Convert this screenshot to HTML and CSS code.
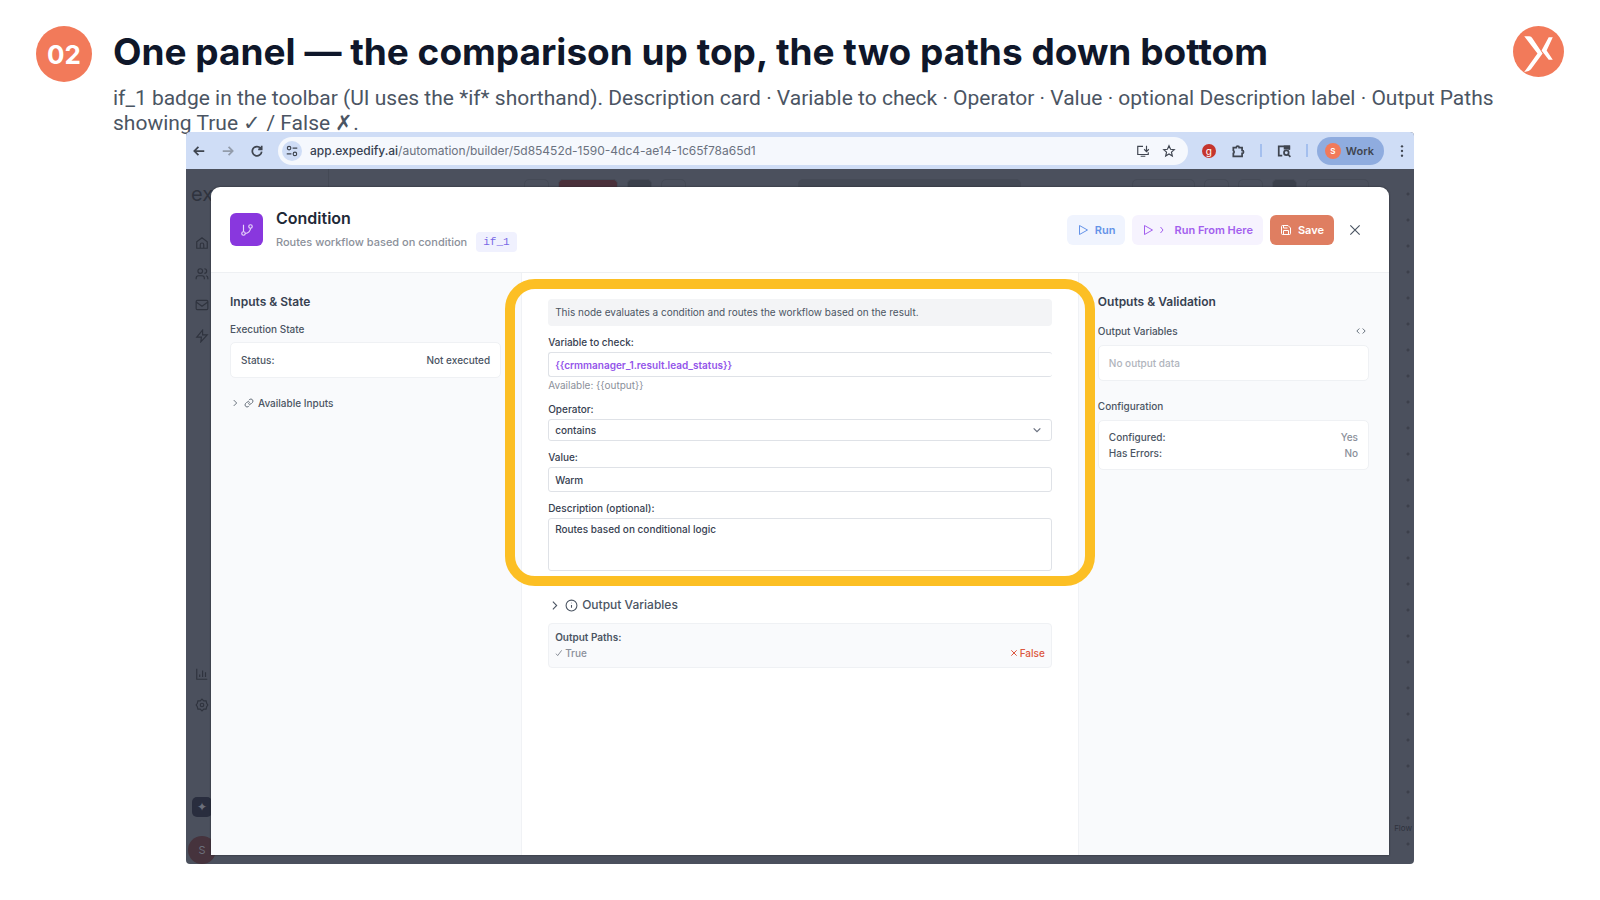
FILE: index.html
```
<!DOCTYPE html>
<html lang="en">
<head>
    <meta charset="UTF-8">
    <meta name="viewport" content="width=device-width, initial-scale=1.0">
    <title>Condition node</title>
    <link rel="stylesheet" href="styles.css">
</head>
<body>
    <main class="slide">
        <header class="slide-header">
            <span class="step">02</span>
            <div class="slide-text">
                <h1>One panel — the comparison up top, the two paths down bottom</h1>
                <p>if_1 badge in the toolbar (UI uses the *if* shorthand). Description card · Variable to check · Operator · Value · optional Description label · Output Paths showing True ✓ / False ✗.</p>
            </div>
            <svg class="brand" viewBox="0 0 50 50">
                <circle cx="25" cy="25" r="25" fill="#f27a5a"/>
                <path d="M11 10h5q2 0 3 2l10 15-11 15q-2 3-7 3l13-18z" fill="#fff"/>
                <path d="M35 11h4l-6 13 6 9h-4l-7-9z" fill="#fff"/>
            </svg>
        </header>

        <section class="browser">
            <div class="chrome">
                <button class="nav-btn" aria-label="Back"><svg viewBox="0 0 24 24"><path d="M21 12H4M11 5l-7 7 7 7"/></svg></button>
                <button class="nav-btn dim" aria-label="Forward"><svg viewBox="0 0 24 24"><path d="M3 12h17M13 5l7 7-7 7"/></svg></button>
                <button class="nav-btn" aria-label="Reload"><svg viewBox="0 0 24 24"><path d="M20 13a8 8 0 1 1-2-6l2 2M20 3v6h-6"/></svg></button>
                <div class="address">
                    <span class="site-info"><svg viewBox="0 0 24 24"><circle cx="7" cy="7" r="3"/><path d="M13 7h8M3 17h8"/><circle cx="17" cy="17" r="3"/></svg></span>
                    <span class="url"><b>app.expedify.ai</b>/automation/builder/5d85452d-1590-4dc4-ae14-1c65f78a65d1</span>
                    <svg viewBox="0 0 24 24"><path d="M12 4H3v14h18v-4M8 21h8M18 3v9M14 9l4 4 4-4"/></svg>
                    <svg viewBox="0 0 24 24"><path d="m12 3 2.700 6 6.300.6-4.800 4.300 1.500 6.600-5.700-3.500-5.700 3.500 1.500-6.600L3 9.600 9.300 9z"/></svg>
                </div>
                <div class="extensions">
                    <span class="ext-red">g</span>
                    <svg viewBox="0 0 24 24"><path d="M4 6h5a2.500 2.500 0 0 1 5 0h5v5a2.500 2.500 0 0 1 0 5v5H4v-5a3 3 0 0 0 0-5z"/></svg>
                    <i class="divider"></i>
                    <svg viewBox="0 0 24 24"><path d="M9 20H3V4h18v6"/><path d="M13 4h8v4h-8z" fill="currentColor"/><circle cx="16" cy="15" r="4"/><path d="m19 18 4 4"/></svg>
                    <i class="divider"></i>
                </div>
                <button class="profile"><span>S</span>Work</button>
                <button class="nav-btn kebab" aria-label="Menu"><svg viewBox="0 0 24 24"><circle cx="12" cy="4" r="2"/><circle cx="12" cy="12" r="2"/><circle cx="12" cy="20" r="2"/></svg></button>
            </div>

            <div class="workspace">
                <!-- dimmed app behind the dialog -->
                <div class="backdrop" aria-hidden="true">
                    <div class="sidebar">
                        <span class="wordmark">ex</span>
                        <svg viewBox="0 0 24 24"><path d="M3 10l9-7 9 7v11H3zM9 21v-6a3 3 0 0 1 6 0v6"/></svg>
                        <svg viewBox="0 0 24 24"><circle cx="9" cy="7" r="4"/><path d="M2 21v-2a4 4 0 0 1 4-4h6a4 4 0 0 1 4 4v2M16 3a4 4 0 0 1 0 8M22 21v-2a4 4 0 0 0-3-4"/></svg>
                        <svg viewBox="0 0 24 24"><rect x="2" y="4" width="20" height="16" rx="2"/><path d="m22 7-10 7L2 7"/></svg>
                        <svg viewBox="0 0 24 24"><path d="M13 2 3 14h8l-1 8 11-12h-8z"/></svg>
                        <svg class="push" viewBox="0 0 24 24"><path d="M3 3v18h18M8 17v-4M13 17V6M18 17v-8"/></svg>
                        <svg viewBox="0 0 24 24"><path d="M12 2l3 3 4 0 1 4 2 3-2 3-1 4-4 0-3 3-3-3-4 0-1-4-2-3 2-3 1-4 4 0z"/><circle cx="12" cy="12" r="3"/></svg>
                        <span class="ai">✦</span>
                        <span class="avatar">S</span>
                    </div>
                    <div class="topbar">
                        <i class="ghost"></i><i class="ghost maroon"></i><i class="ghost solid"></i><i class="ghost"></i>
                        <i class="ghost tabs"></i>
                        <i class="ghost wide"></i><i class="ghost"></i><i class="ghost"></i><i class="ghost solid"></i><i class="ghost wide"></i>
                    </div>
                    <div class="canvas">
                        <span class="flow">Flow</span>
                    </div>
                </div>

                <div class="modal" role="dialog" aria-labelledby="modal-title">
                    <header class="modal-header">
                        <span class="node-icon"><svg viewBox="0 0 24 24"><path d="M6 3v12M18 9a9 9 0 0 1-9 9"/><circle cx="18" cy="6" r="3"/><circle cx="6" cy="18" r="3"/></svg></span>
                        <div class="node-name">
                            <h2 id="modal-title">Condition</h2>
                            <p>Routes workflow based on condition <code>if_1</code></p>
                        </div>
                        <button class="btn run"><svg viewBox="0 0 24 24"><path d="M5 3l16 9-16 9z"/></svg>Run</button>
                        <button class="btn run-from"><svg viewBox="0 0 24 24"><path d="M5 3l16 9-16 9z"/></svg><svg viewBox="0 0 24 24"><path d="m9 6 5 6-5 6"/></svg>Run From Here</button>
                        <button class="btn save"><svg viewBox="0 0 24 24"><path d="M5 3h11l5 5v11a2 2 0 0 1-2 2H5a2 2 0 0 1-2-2V5a2 2 0 0 1 2-2zM7 3v5h8M7 21v-8h10v8"/></svg>Save</button>
                        <button class="close" aria-label="Close"><svg viewBox="0 0 24 24"><path d="M4 4l16 16M20 4L4 20"/></svg></button>
                    </header>

                    <div class="columns">
                        <aside class="side">
                            <h3>Inputs &amp; State</h3>
                            <h4>Execution State</h4>
                            <dl class="card">
                                <div><dt>Status:</dt><dd>Not executed</dd></div>
                            </dl>
                            <button class="toggle">
                                <svg viewBox="0 0 24 24"><path d="m9 5 7 7-7 7"/></svg>
                                <svg viewBox="0 0 24 24"><path d="M10 13a5 5 0 0 0 7.500.5l3-3a5 5 0 0 0-7-7l-2 2M14 11a5 5 0 0 0-7.500-.5l-3 3a5 5 0 0 0 7 7l2-2"/></svg>
                                Available Inputs
                            </button>
                        </aside>

                        <div class="main-col">
                            <form class="fields">
                                <p class="notice">This node evaluates a condition and routes the workflow based on the result.</p>
                                <label for="variable">Variable to check:</label>
                                <input class="variable" id="variable" type="text" value="{{crmmanager_1.result.lead_status}}">
                                <p class="hint">Available: {{output}}</p>
                                <label for="operator">Operator:</label>
                                <select id="operator"><option>contains</option></select>
                                <label for="value">Value:</label>
                                <input id="value" type="text" value="Warm">
                                <label for="description">Description (optional):</label>
                                <textarea id="description">Routes based on conditional logic</textarea>
                            </form>
                            <button class="toggle large">
                                <svg viewBox="0 0 24 24"><path d="m9 5 7 7-7 7"/></svg>
                                <svg viewBox="0 0 24 24"><circle cx="12" cy="12" r="10"/><path d="M12 16v-5M12 7v1"/></svg>
                                Output Variables
                            </button>
                            <div class="paths">
                                <strong>Output Paths:</strong>
                                <div class="path-row">
                                    <span><svg viewBox="0 0 24 24"><path d="m3 14 5 6L20 4"/></svg>True</span>
                                    <span class="false"><svg viewBox="0 0 24 24"><path d="M4 4l16 16M20 4L4 20"/></svg>False</span>
                                </div>
                            </div>
                        </div>

                        <aside class="side right">
                            <h3>Outputs &amp; Validation</h3>
                            <h4>Output Variables <svg viewBox="0 0 24 24"><path d="m8 6-6 6 6 6M16 6l6 6-6 6"/></svg></h4>
                            <p class="card empty">No output data</p>
                            <h4>Configuration</h4>
                            <dl class="card">
                                <div><dt>Configured:</dt><dd>Yes</dd></div>
                                <div><dt>Has Errors:</dt><dd>No</dd></div>
                            </dl>
                        </aside>
                    </div>
                </div>
            </div>
        </section>
    </main>
</body>
</html>
```
FILE: styles.css
```
:root {
    --coral: #f27a5a;
    --ink: #0f172a;
    --text: #4b5563;
    --muted: #8b909a;
    --panel: #f9fafc;
    --purple: #9354ea;
    --yellow: #fcbf24;
    --dim: #4b505d;
}

* {
    box-sizing: border-box;
}

body {
    margin: 0;
    background: #fff;
    color: var(--text);
    font-family: Inter, "Liberation Sans", sans-serif;
}

h1, h2, h3, h4, p, dl, dd {
    margin: 0;
}

button, input, select, textarea {
    font-family: inherit;
    color: inherit;
}

button {
    display: flex;
    align-items: center;
    padding: 0;
    border: 0;
    background: none;
    cursor: pointer;
}

svg {
    flex: none;
    width: 14px;
    height: 14px;
    fill: none;
    stroke: currentColor;
    stroke-width: 2;
}

/* Slide header */

.slide {
    display: flex;
    flex-direction: column;
    min-height: 100vh;
    padding: 26px 36px 36px;
}

.slide-header {
    display: flex;
    align-items: flex-start;
    height: 106px;
}

.step {
    display: flex;
    flex: none;
    align-items: center;
    justify-content: center;
    width: 56px;
    height: 56px;
    margin-right: 21px;
    border-radius: 50%;
    background: var(--coral);
    color: #fff;
    font-size: 26px;
    font-weight: 700;
}

.slide-text {
    flex: 1;
}

.slide-text h1 {
    color: var(--ink);
    font-size: 37px;
    line-height: 52px;
    font-weight: 700;
}

.slide-text p {
    padding-top: 8px;
    font-family: Roboto, "Liberation Sans", sans-serif;
    font-size: 21px;
    line-height: 25px;
}

.brand {
    width: 51px;
    height: 51px;
    stroke: none;
}

/* Browser window */

.browser {
    display: flex;
    flex: 1;
    flex-direction: column;
    width: calc(100% - 300px);
    margin: 0 auto;
    overflow: hidden;
    border-radius: 4px;
    background: var(--dim);
}

.chrome {
    display: flex;
    align-items: center;
    height: 37px;
    padding: 0 5px;
    background: #cfddf6;
    color: #3f4550;
}

.chrome svg {
    stroke-width: 3;
}

.nav-btn {
    width: 29px;
    padding-left: 1px;
}

.nav-btn.dim {
    color: #939cab;
}

.kebab {
    width: 14px;
    padding: 0;
}

.kebab svg {
    fill: currentColor;
    stroke: none;
}

.address {
    display: flex;
    flex: 1;
    align-items: center;
    gap: 12px;
    height: 28px;
    padding: 0 12px 0 4px;
    border-radius: 14px;
    background: #f5f8fd;
}

.address svg {
    stroke-width: 2;
}

.site-info {
    display: flex;
    align-items: center;
    justify-content: center;
    width: 20px;
    height: 20px;
    margin-right: -4px;
    border-radius: 50%;
    background: #cfddf6;
}

.url {
    flex: 1;
    color: #6b7280;
    font-size: 12px;
}

.url b {
    color: #374151;
    font-weight: 500;
}

.extensions {
    display: flex;
    align-items: center;
    gap: 15px;
    padding: 0 9px 0 14px;
}

.ext-red {
    width: 14px;
    border-radius: 50%;
    background: #c5352d;
    color: #fff;
    font-size: 10px;
    line-height: 14px;
    text-align: center;
}

.divider {
    width: 2px;
    height: 13px;
    background: #a4bfee;
}

.profile {
    gap: 5px;
    height: 28px;
    margin-right: 11px;
    padding: 0 10px 0 8px;
    border-radius: 14px;
    background: #8facdf;
    font-size: 11px;
    font-weight: 600;
}

.profile span {
    width: 16px;
    border-radius: 50%;
    background: var(--coral);
    color: #fff;
    font-size: 8px;
    line-height: 16px;
}

/* Dimmed app, shares one grid cell with the dialog */

.workspace {
    display: grid;
    flex: 1;
}

.backdrop,
.modal {
    grid-area: 1 / 1;
}

.backdrop {
    display: grid;
    grid-template-rows: 18px 1fr;
    grid-template-columns: 142px 1fr;
    color: #2f333e;
}

.sidebar {
    display: flex;
    grid-row: span 2;
    flex-direction: column;
    align-items: center;
    gap: 17px;
    width: 32px;
}

.wordmark {
    height: 50px;
    padding-top: 13px;
    font-size: 20px;
    line-height: 24px;
}

.push {
    margin-top: auto;
}

.ai {
    width: 20px;
    margin: 68px 0 2px;
    border-radius: 5px;
    background: #292d3e;
    color: #6b6f7b;
    font-size: 12px;
    line-height: 20px;
    text-align: center;
}

.avatar {
    width: 28px;
    border-radius: 50%;
    background: #46333d;
    color: #6b6f7b;
    font-size: 11px;
    line-height: 28px;
    text-align: center;
}

.topbar {
    display: flex;
    gap: 9px;
    padding: 10px 45px 0 195px;
    overflow: hidden;
    border-left: 1px solid #444955;
}

.ghost {
    width: 25px;
    height: 20px;
    border: 1px solid #454a56;
    border-radius: 5px;
}

.ghost.wide {
    width: 63px;
}

.ghost.solid {
    background: #3b404b;
}

.ghost.maroon {
    width: 60px;
    background: #4a303a;
}

.ghost.tabs {
    width: 223px;
    margin: 0 auto;
    background: #444955;
}

.canvas {
    display: flex;
    align-items: flex-end;
    justify-content: flex-end;
    padding: 0 2px 29px 0;
    background: radial-gradient(circle, #3c404b 1px, transparent 2px) right -7px top 20px / 26px 26px;
}

.flow {
    font-size: 8px;
    line-height: 14px;
}

/* Dialog */

.modal {
    display: flex;
    flex-direction: column;
    z-index: 1;
    margin: 18px 25px 9px;
    border-radius: 9px 9px 0 0;
    background: #fff;
    box-shadow: 0 0 2px #22252d;
}

.modal-header {
    display: flex;
    align-items: center;
    height: 86px;
    padding: 0 27px 0 19px;
    border-bottom: 1px solid #eef0f3;
}

.node-icon {
    display: flex;
    align-items: center;
    justify-content: center;
    width: 33px;
    height: 33px;
    margin-right: 13px;
    border-radius: 6px;
    background: #8937de;
    color: #e6d5fa;
}

.node-name {
    flex: 1;
}

.node-name h2 {
    margin-bottom: 3px;
    color: #1f2937;
    font-size: 16px;
    line-height: 22px;
    font-weight: 600;
}

.node-name p {
    display: flex;
    align-items: center;
    gap: 9px;
    color: var(--muted);
    font-size: 11px;
    line-height: 20px;
    font-weight: 500;
}

.node-name code {
    padding: 0 7px;
    border-radius: 4px;
    background: #f0f1fe;
    color: #7868e6;
    font-family: "Liberation Mono", monospace;
    font-size: 11px;
    line-height: 20px;
}

.btn {
    gap: 6px;
    height: 30px;
    margin-right: 7px;
    padding: 0 10px;
    border-radius: 6px;
    font-size: 11px;
    font-weight: 600;
}

.btn svg {
    width: 12px;
    height: 12px;
}

.run {
    background: #f0f4fe;
    color: #6493e8;
}

.run-from {
    background: #f6f3fe;
    color: #a35fee;
}

.run-from svg + svg {
    margin-left: -4px;
}

.save {
    margin-right: 14px;
    background: #df7e61;
    color: #fff;
}

.columns {
    display: grid;
    flex: 1;
    grid-template-columns: 28fr 50fr 28fr;
}

.side {
    padding: 20px 20px 0 19px;
    border-right: 1px solid #f0f2f5;
    background: var(--panel);
}

.side.right {
    border-right: 0;
    border-left: 1px solid #f0f2f5;
}

.side h3 {
    color: #374151;
    font-size: 12px;
    line-height: 18px;
    font-weight: 600;
}

.side h4 {
    display: flex;
    align-items: center;
    justify-content: space-between;
    padding: 9px 3px 4px 0;
    font-size: 10px;
    line-height: 18px;
    font-weight: 500;
}

.right h4 {
    padding: 11px 3px 5px 0;
}

.side h4 svg {
    width: 10px;
    height: 10px;
}

.card {
    margin-bottom: 17px;
    padding: 9px 10px;
    border: 1px solid #eff1f4;
    border-radius: 5px;
    background: #fff;
    font-size: 10px;
    line-height: 16px;
    font-weight: 500;
}

.card div {
    display: flex;
    justify-content: space-between;
}

.card.empty {
    margin-bottom: 5px;
    color: #b0b4bc;
}

.right dl {
    padding: 8px 10px;
}

.right dd {
    color: var(--muted);
}

.toggle {
    gap: 4px;
    font-size: 10px;
    line-height: 16px;
    font-weight: 500;
}

.toggle svg {
    width: 10px;
    height: 10px;
}

.toggle.large {
    margin: 26px 0 10px;
    font-size: 12px;
}

.toggle.large svg {
    width: 13px;
    height: 13px;
}

.main-col {
    padding: 26px 26px 0;
}

.fields {
    display: flex;
    position: relative;
    flex-direction: column;
    color: #374151;
    font-size: 10px;
}

/* yellow marker drawn around the form */
.fields::after {
    content: "";
    position: absolute;
    inset: -20px -43px -15px;
    border: 10px solid var(--yellow);
    border-radius: 30px;
    pointer-events: none;
}

.notice {
    padding: 0 7px;
    border-radius: 4px;
    background: #f3f4f6;
    color: var(--text);
    line-height: 27px;
}

.fields label {
    padding: 8px 0 2px;
    line-height: 16px;
    font-weight: 500;
}

.fields input,
.fields select,
.fields textarea {
    width: 100%;
    height: 25px;
    padding: 0 6px;
    border: 1px solid #dfe2e7;
    border-radius: 3px;
    outline: 0;
    background: #fff;
    font-size: 10px;
    font-weight: 500;
}

.fields .variable {
    border-right: 0;
    color: var(--purple);
    font-weight: 600;
}

.hint {
    color: var(--muted);
    line-height: 16px;
}

.fields select {
    height: 22px;
    appearance: none;
    background: url("data:image/svg+xml,%3Csvg xmlns='http://www.w3.org/2000/svg' viewBox='0 0 24 24' fill='none' stroke='%236b7280' stroke-width='3'%3E%3Cpath d='m4 8 8 8 8-8'/%3E%3C/svg%3E") no-repeat right 9px center / 10px;
}

.fields textarea {
    height: 53px;
    padding-top: 3px;
    line-height: 15px;
    resize: none;
}

.paths {
    padding: 5px 6px 6px;
    border: 1px solid #eff1f4;
    border-radius: 4px;
    background: var(--panel);
    font-size: 10px;
    line-height: 16px;
    font-weight: 500;
}

.paths strong {
    font-weight: 600;
}

.path-row {
    display: flex;
    justify-content: space-between;
    color: var(--muted);
}

.path-row svg {
    width: 8px;
    height: 8px;
    margin-right: 2px;
    stroke-width: 3;
}

.path-row .false {
    color: #dc5740;
}
```
